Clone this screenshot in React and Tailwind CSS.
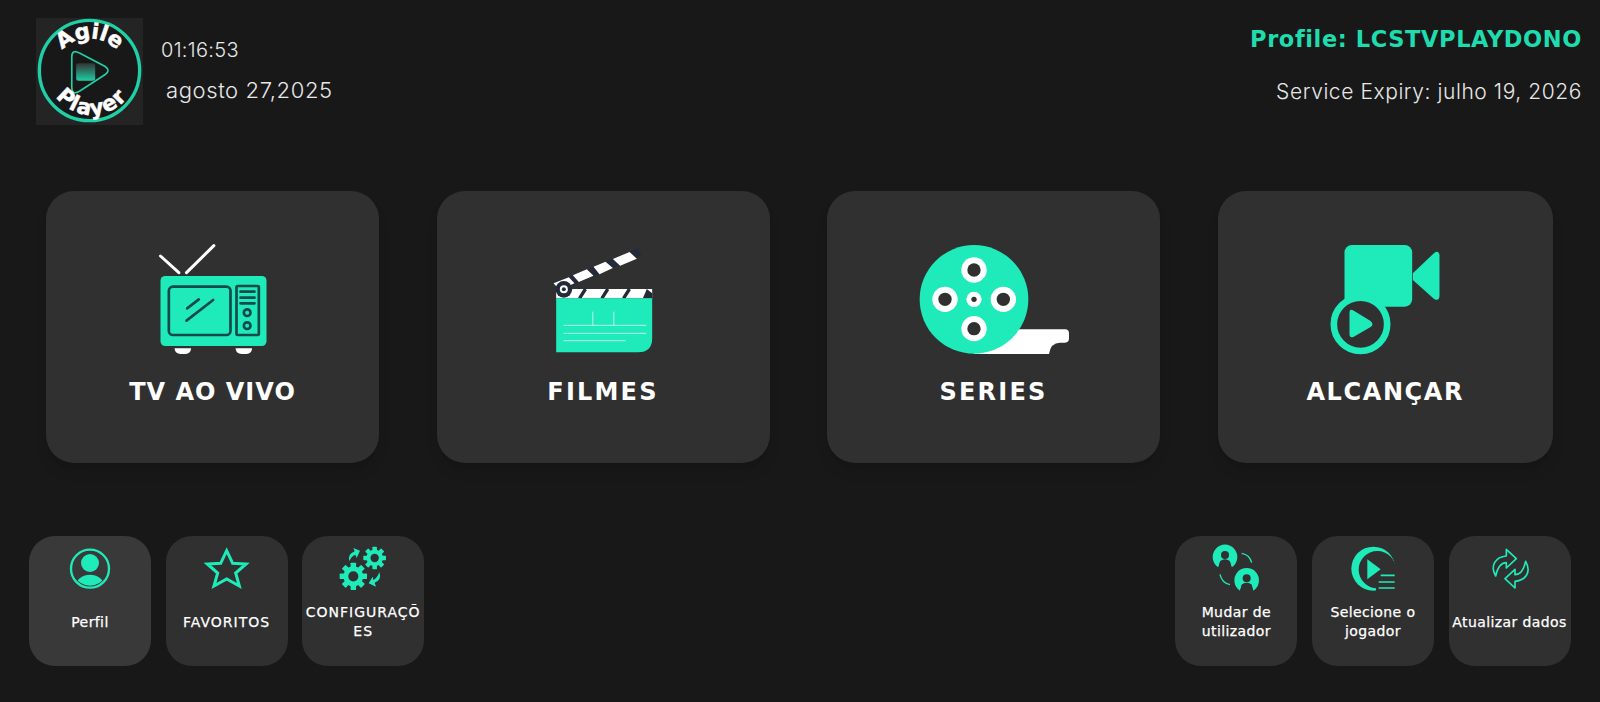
import React from 'react';

const GREEN = '#1eebb9';
const CARD = '#303030';

// the icons below are drawn in the coordinates of the reference crops (3x), so the viewBox does the scaling
function TvIcon() {
  return (
    <svg viewBox="-7.5 30 510 360" className="w-full h-full">
      <path d="M90 78L145 128M250 47L168 128" stroke="#fff" strokeWidth="9" strokeLinecap="round" />
      <rect x="90" y="138" width="318" height="210" rx="14" fill={GREEN} />
      <rect x="115" y="170" width="185" height="145" rx="12" fill="none" stroke="#17494a" strokeWidth="8" />
      <rect x="318" y="168" width="67" height="147" rx="3" fill="none" stroke="#17494a" strokeWidth="8" />
      <path d="M330 185H372M330 203H372M330 220H372M170 235L205 208M168 272L248 210" stroke="#17494a" strokeWidth="8" strokeLinecap="round" />
      <circle cx="350" cy="248" r="10" fill="none" stroke="#17494a" strokeWidth="8" />
      <circle cx="350" cy="287" r="10" fill="none" stroke="#17494a" strokeWidth="8" />
      <path d="M132 355H182Q180 372 165 372H150Q134 372 132 355ZM315 355H365Q363 372 348 372H333Q317 372 315 355Z" fill="#fff" />
    </svg>
  );
}

function ClapperIcon() {
  return (
    <svg viewBox="-34.5 30 510 360" className="w-full h-full">
      <path d="M72 160L325 55L335 76L85 186Z" fill="#232a3a" />
      <path d="M72 160L118 142L135 160L90 180ZM130 136L172 118L192 137L148 156ZM192 110L228 95L250 114L210 133ZM250 87L300 66L322 86L272 107Z" fill="#fff" />
      <rect x="80" y="177" width="288" height="28" fill="#fff" />
      <path d="M168 177L150 205M235 177L217 205M300 177L282 205" stroke="#232a3a" strokeWidth="10" />
      <path d="M352 177L340 205H368V190Z" fill="#232a3a" />
      <circle cx="103" cy="178" r="25" fill="#232a3a" />
      <circle cx="103" cy="178" r="12" fill="#fff" />
      <circle cx="103" cy="178" r="6" fill="#232a3a" />
      <path d="M80 205H368V325Q368 367 326 367H80Z" fill={GREEN} />
      <path d="M102 286H350M102 310H350M102 332H288M190 245V286M253 245V286" stroke="#b8f5e4" strokeWidth="3" />
    </svg>
  );
}

function ReelIcon() {
  const holes = [[222, 120], [222, 296], [135, 208], [310, 208]];
  return (
    <svg viewBox="27 30 510 360" className="w-full h-full">
      <path d="M222 372V298H495Q507 298 507 310V325Q507 338 495 338H480Q452 338 447 372Z" fill="#fff" />
      <circle cx="222" cy="208" r="163" fill={GREEN} />
      {holes.map(([x, y]) => (
        <g key={x + '-' + y}>
          <circle cx={x} cy={y} r="38" fill="#fff" />
          <circle cx={x} cy={y} r="20" fill={CARD} />
        </g>
      ))}
      <circle cx="222" cy="208" r="23" fill="#fff" />
      <circle cx="222" cy="208" r="8" fill={CARD} />
    </svg>
  );
}

function CameraIcon() {
  return (
    <svg viewBox="1.5 30 510 360" className="w-full h-full">
      <rect x="135" y="45" width="203" height="185" rx="22" fill={GREEN} />
      <path d="M340 130L405 68Q418 60 420 76V198Q418 216 403 206L340 150Z" fill={GREEN} />
      <circle cx="183" cy="283" r="80" fill={CARD} stroke={GREEN} strokeWidth="20" />
      <path d="M150 248Q150 234 163 242L212 272Q226 283 212 292L163 320Q150 326 150 312Z" fill={GREEN} />
    </svg>
  );
}

function PersonIcon() {
  return (
    <svg viewBox="27 32 366 180" className="w-full h-full">
      <defs>
        <clipPath id="person-clip"><circle cx="210" cy="130" r="51" /></clipPath>
      </defs>
      <circle cx="210" cy="130" r="57" fill="none" stroke={GREEN} strokeWidth="7" />
      <circle cx="210" cy="113" r="27" fill={GREEN} />
      <ellipse cx="210" cy="190" rx="46" ry="42" fill={GREEN} clipPath="url(#person-clip)" />
    </svg>
  );
}

function StarIcon() {
  return (
    <svg viewBox="436 32 366 180" className="w-full h-full">
      <path d="M618 76L636 114L676 116L645 143L656 182L618 161L580 182L591 143L560 116L600 114Z" fill="none" stroke={GREEN} strokeWidth="9" />
    </svg>
  );
}

function Gear({ cx, cy, r }) {
  const teeth = [0, 45, 90, 135, 180, 225, 270, 315];
  return (
    <g>
      {teeth.map((a) => (
        <rect key={a} x={cx - r * 0.2} y={cy - r} width={r * 0.4} height={r * 0.5} rx="2" fill={GREEN} transform={`rotate(${a} ${cx} ${cy})`} />
      ))}
      <circle cx={cx} cy={cy} r={r * 0.55} fill="none" stroke={GREEN} strokeWidth={r * 0.36} />
    </g>
  );
}

function GearsIcon() {
  return (
    <svg viewBox="846 32 366 180" className="w-full h-full">
      <Gear cx={1000} cy={153} r={41} />
      <Gear cx={1064} cy={98} r={34} />
      <path d="M988 108Q982 86 1004 78L1000 68L1020 76L1010 98L1006 88Q994 92 988 108Z" fill={GREEN} />
      <path d="M1078 140Q1086 164 1064 172L1068 184L1046 174L1058 154L1060 164Q1072 158 1078 140Z" fill={GREEN} />
    </svg>
  );
}

function UserBadge({ cx, cy }) {
  return (
    <g>
      <path d={`M${cx - 20} ${cy + 31}A37 37 0 1 1 ${cx + 20} ${cy + 31}L${cx + 14} ${cy + 12}Q${cx} ${cy + 2} ${cx - 14} ${cy + 12}Z`} fill={GREEN} />
      <circle cx={cx} cy={cy - 6} r="12" fill={CARD} />
      <path d={`M${cx - 20} ${cy + 32}L${cx - 15} ${cy + 14}Q${cx} ${cy + 2} ${cx + 15} ${cy + 14}L${cx + 20} ${cy + 32}Z`} fill={CARD} />
    </g>
  );
}

function SwapIcon() {
  return (
    <svg viewBox="30 32 366 180" className="w-full h-full">
      <UserBadge cx={180} cy={95} />
      <UserBadge cx={245} cy={165} />
      <path d="M230 84Q254 88 260 112M165 147Q170 172 195 178" fill="none" stroke={GREEN} strokeWidth="4" />
    </svg>
  );
}

function PlayerIcon() {
  return (
    <svg viewBox="440 32 366 180" className="w-full h-full">
      <circle cx="624" cy="130" r="66" fill={GREEN} />
      <circle cx="636" cy="133" r="56" fill={CARD} />
      <rect x="632" y="136" width="70" height="62" fill={CARD} />
      <path d="M606 102L646 132L606 162Z" fill={GREEN} />
      <path d="M646 150H688M640 170H688M640 188H688" stroke={GREEN} strokeWidth="5" />
    </svg>
  );
}

function RefreshIcon() {
  const arrow = 'M990 152C972 120 990 95 1022 92L1022 72L1052 100L1022 128L1022 112C1005 112 995 130 990 152Z';
  return (
    <svg viewBox="850 32 366 180" className="w-full h-full">
      <path d={arrow} fill="none" stroke={GREEN} strokeWidth="5" strokeLinejoin="round" />
      <path d={arrow} fill="none" stroke={GREEN} strokeWidth="5" strokeLinejoin="round" transform="rotate(180 1035 130)" />
    </svg>
  );
}

function Logo() {
  return (
    <svg viewBox="48 53 320 320" className="w-[107px] h-[107px] shrink-0 bg-[#242424]">
      <defs>
        <path id="logo-top" d="M96 226A112 112 0 0 1 320 226" />
        <path id="logo-bottom" d="M82 210A133 133 0 0 0 348 210" />
        <linearGradient id="logo-tv" x1="0" y1="0" x2="0" y2="1">
          <stop offset="0" stopColor="#333" />
          <stop offset="1" stopColor="#1fcfa6" />
        </linearGradient>
      </defs>
      <circle cx="208" cy="210" r="150" fill="#181818" stroke="#1fcfa6" strokeWidth="10" />
      <path d="M155 170Q155 145 178 158L255 198Q272 210 255 222L178 272Q155 285 155 260Z" fill="#181818" stroke="#1fcfa6" strokeWidth="5" />
      <rect x="168" y="188" width="57" height="53" rx="7" fill="url(#logo-tv)" />
      <text fill="#fff" stroke="#fff" strokeWidth="1.5" fontSize="64" fontWeight="700" textAnchor="middle" className="[font-family:'DejaVu_Sans',sans-serif]">
        <textPath href="#logo-top" startOffset="50%">Agile</textPath>
      </text>
      <text fill="#fff" stroke="#fff" strokeWidth="1.5" fontSize="64" fontWeight="700" letterSpacing="4" textAnchor="middle" className="[font-family:'DejaVu_Sans',sans-serif]">
        <textPath href="#logo-bottom" startOffset="50%">Player</textPath>
      </text>
    </svg>
  );
}

function MainCard({ label, icon, tracking }) {
  return (
    <div className="h-[272px] rounded-[28px] bg-[#303030] flex flex-col items-center pt-[49px] shadow-lg">
      <div className="w-[170px] h-[120px]">{icon}</div>
      <div className={`mt-[18px] text-[24px] leading-[28px] font-bold text-white [font-family:'DejaVu_Sans',sans-serif] ${tracking}`}>
        {label}
      </div>
    </div>
  );
}

function SmallButton({ label, icon, lighter, caps }) {
  return (
    <div className={`w-[122px] h-[130px] rounded-[26px] flex flex-col items-center ${lighter ? 'bg-[#393939]' : 'bg-[#303030]'}`}>
      <div className="w-[122px] h-[60px] shrink-0">{icon}</div>
      <div className={`h-[52px] flex items-center justify-center text-center whitespace-pre-line text-[14px] leading-[19px] text-white [font-family:'DejaVu_Sans',sans-serif] [-webkit-text-stroke:0.25px_white] ${caps ? 'tracking-[1px]' : 'tracking-[0.4px]'}`}>
        {label}
      </div>
    </div>
  );
}

export default function App() {
  return (
    <div className="w-[1600px] h-[702px] overflow-hidden bg-[#181818] text-white [font-family:Inter,sans-serif]">
      <header className="h-[125px] pt-[18px] pl-[36px] pr-[18px] flex justify-between">
        <div className="flex">
          <Logo />
          <div className="ml-[18px] pt-[19px] font-light text-[#e8e8e8]">
            <div className="text-[20px] leading-[26px] tracking-[0.3px]">01:16:53</div>
            <div className="mt-[14px] ml-[5px] text-[22px] leading-[26px] tracking-[0.6px]">agosto 27,2025</div>
          </div>
        </div>
        <div className="text-right">
          <div className="mt-[7px] text-[22.5px] leading-[28px] font-bold tracking-[0.6px] text-[#1fdcae] [font-family:'DejaVu_Sans',sans-serif]">Profile: LCSTVPLAYDONO</div>
          <div className="mt-[25px] text-[21px] leading-[28px] font-light tracking-[0.57px] text-[#e8e8e8]">Service Expiry: julho 19, 2026</div>
        </div>
      </header>

      <section className="mt-[66px] pl-[46px] pr-[47px] grid grid-cols-[333px_333px_333px_1fr] gap-[57.5px]">
        <MainCard label="TV AO VIVO" icon={<TvIcon />} tracking="tracking-[1px]" />
        <MainCard label="FILMES" icon={<ClapperIcon />} tracking="tracking-[2.2px]" />
        <MainCard label="SERIES" icon={<ReelIcon />} tracking="tracking-[2.2px]" />
        <MainCard label="ALCANÇAR" icon={<CameraIcon />} tracking="tracking-[1.6px]" />
      </section>

      <footer className="mt-[73px] pl-[29px] pr-[29.5px] flex justify-between">
        <div className="flex gap-[14.6px]">
          <SmallButton label="Perfil" icon={<PersonIcon />} lighter />
          <SmallButton label="FAVORITOS" icon={<StarIcon />} caps />
          <SmallButton label={'CONFIGURAÇÕ\nES'} icon={<GearsIcon />} caps />
        </div>
        <div className="flex gap-[14.6px]">
          <SmallButton label={'Mudar de\nutilizador'} icon={<SwapIcon />} />
          <SmallButton label={'Selecione o\njogador'} icon={<PlayerIcon />} />
          <SmallButton label="Atualizar dados" icon={<RefreshIcon />} />
        </div>
      </footer>
    </div>
  );
}
